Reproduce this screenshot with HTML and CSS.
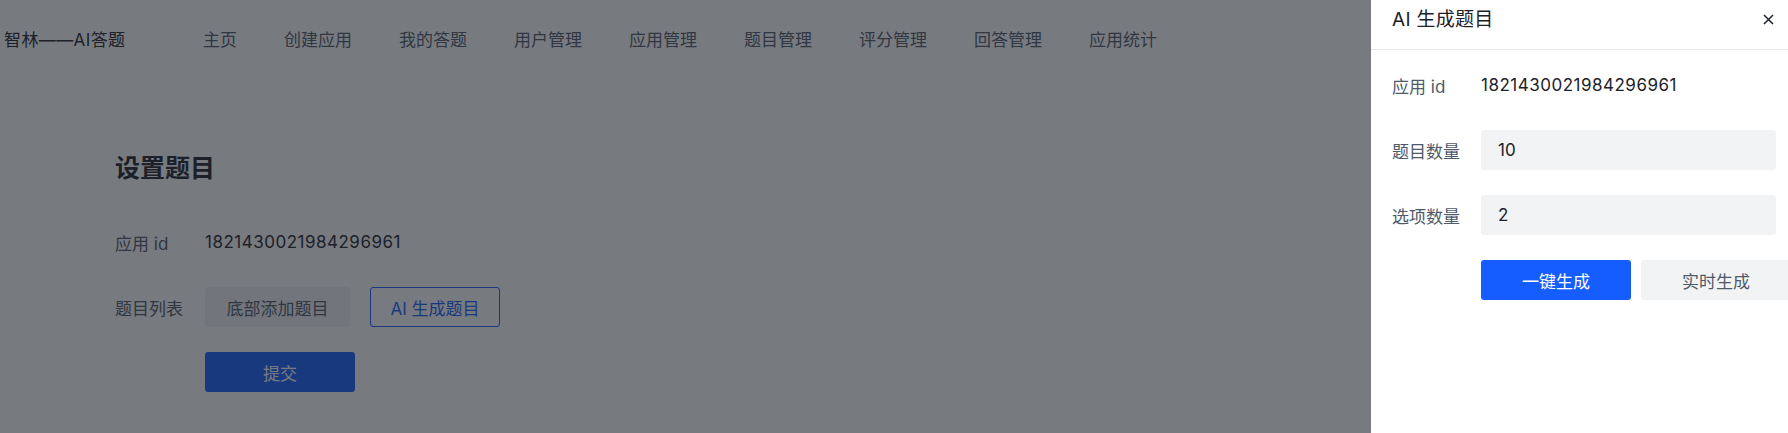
FILE: index.html
```html
<!DOCTYPE html>
<html lang="zh-CN">
<head>
<meta charset="utf-8">
<title>智林——AI答题</title>
<link rel="stylesheet" href="styles.css">
</head>
<body>
<div class="page">
  <header class="topbar">
    <div class="logo">智林——AI答题</div>
    <nav class="nav">
      <span class="nav-item">主页</span>
      <span class="nav-item">创建应用</span>
      <span class="nav-item">我的答题</span>
      <span class="nav-item">用户管理</span>
      <span class="nav-item">应用管理</span>
      <span class="nav-item">题目管理</span>
      <span class="nav-item">评分管理</span>
      <span class="nav-item">回答管理</span>
      <span class="nav-item">应用统计</span>
    </nav>
  </header>
  <main class="content">
    <h2 class="title">设置题目</h2>
    <div class="form">
      <div class="row">
        <div class="label">应用 id</div>
        <div class="value">1821430021984296961</div>
      </div>
      <div class="row">
        <div class="label">题目列表</div>
        <div class="controls">
          <button class="btn btn-secondary wide">底部添加题目</button>
          <button class="btn btn-outline">AI 生成题目</button>
        </div>
      </div>
      <div class="row">
        <div class="label"></div>
        <div class="controls">
          <button class="btn btn-primary fixed">提交</button>
        </div>
      </div>
    </div>
  </main>
</div>
<div class="mask"></div>
<aside class="drawer">
  <div class="drawer-header">
    <div class="drawer-title">AI 生成题目</div>
    <span class="close" aria-label="关闭">
      <svg width="11" height="11" viewBox="0 0 11 11"><path d="M1 1L10 10M10 1L1 10" stroke="#1d2129" stroke-width="1.5" fill="none"/></svg>
    </span>
  </div>
  <div class="drawer-body">
    <div class="drow">
      <div class="dlabel">应用 id</div>
      <div class="value">1821430021984296961</div>
    </div>
    <div class="drow">
      <div class="dlabel">题目数量</div>
      <div class="input">10</div>
    </div>
    <div class="drow">
      <div class="dlabel">选项数量</div>
      <div class="input">2</div>
    </div>
    <div class="drow">
      <div class="dlabel"></div>
      <div class="controls tight">
        <button class="btn btn-primary fixed">一键生成</button>
        <button class="btn btn-secondary fixed">实时生成</button>
      </div>
    </div>
  </div>
</aside>
</body>
</html>
```

FILE: styles.css
```css
* { box-sizing: border-box; }
html, body {
  margin: 0;
  padding: 0;
  width: 1788px;
  height: 433px;
  overflow: hidden;
  background: #fff;
  font-family: "Inter", "Noto Sans CJK SC", sans-serif;
  font-size: 17px;
  color: #1d2129;
}
.page { height: 433px; }
.topbar {
  height: 76px;
  display: flex;
  align-items: center;
  padding-left: 4px;
}
.logo {
  width: 199px;
  color: #1d2129;
  font-size: 17px;
  letter-spacing: 0.4px;
}
.nav {
  display: flex;
  gap: 47px;
  color: #4e5969;
}
.nav-item { white-space: nowrap; }
.content { padding-left: 115px; }
.title {
  margin: 74px 0 0;
  height: 36px;
  line-height: 36px;
  font-size: 25px;
  font-weight: 700;
  color: #1d2129;
}
.form {
  margin-top: 36px;
  display: flex;
  flex-direction: column;
  gap: 25px;
}
.row, .drow {
  display: flex;
  align-items: center;
  height: 40px;
}
.label {
  width: 90px;
  color: #4e5969;
  flex: none;
}
.value {
  color: #1d2129;
  letter-spacing: 0.5px;
}
.controls {
  display: flex;
  gap: 20px;
}
.controls.tight { gap: 10px; }
.btn {
  height: 40px;
  border-radius: 3px;
  border: 1px solid transparent;
  font-family: inherit;
  font-size: 17px;
  padding: 0 21px;
  cursor: pointer;
  flex: none;
}
.btn.fixed { width: 150px; padding: 0; }
.btn.wide { width: 145px; padding: 0; }
.btn-secondary { background: #f2f3f5; color: #4e5969; }
.btn-primary { background: #165dff; color: #fff; }
.btn-outline {
  background: transparent;
  border-color: #165dff;
  color: #165dff;
  width: 130px;
  padding: 0;
}
.mask {
  position: fixed;
  inset: 0;
  background: rgba(29, 33, 41, 0.6);
}
.drawer {
  position: fixed;
  top: 0;
  right: 0;
  width: 417px;
  height: 433px;
  background: #fff;
  overflow: hidden;
}
.drawer-header {
  height: 50px;
  border-bottom: 1px solid #e5e6eb;
  display: flex;
  align-items: flex-start;
  justify-content: space-between;
  padding: 5px 14px 0 21px;
}
.drawer-title {
  font-size: 19px;
  line-height: 29px;
  color: #1d2129;
  letter-spacing: 0.3px;
}
.close {
  display: flex;
  align-items: center;
  height: 29px;
}
.drawer-body {
  padding: 15px 12px 0 21px;
  display: flex;
  flex-direction: column;
  gap: 25px;
}
.dlabel {
  width: 89px;
  flex: none;
  color: #4e5969;
}
.input {
  flex: 1;
  height: 40px;
  line-height: 40px;
  background: #f2f3f5;
  border-radius: 3px;
  padding-left: 17px;
  color: #1d2129;
}
```
